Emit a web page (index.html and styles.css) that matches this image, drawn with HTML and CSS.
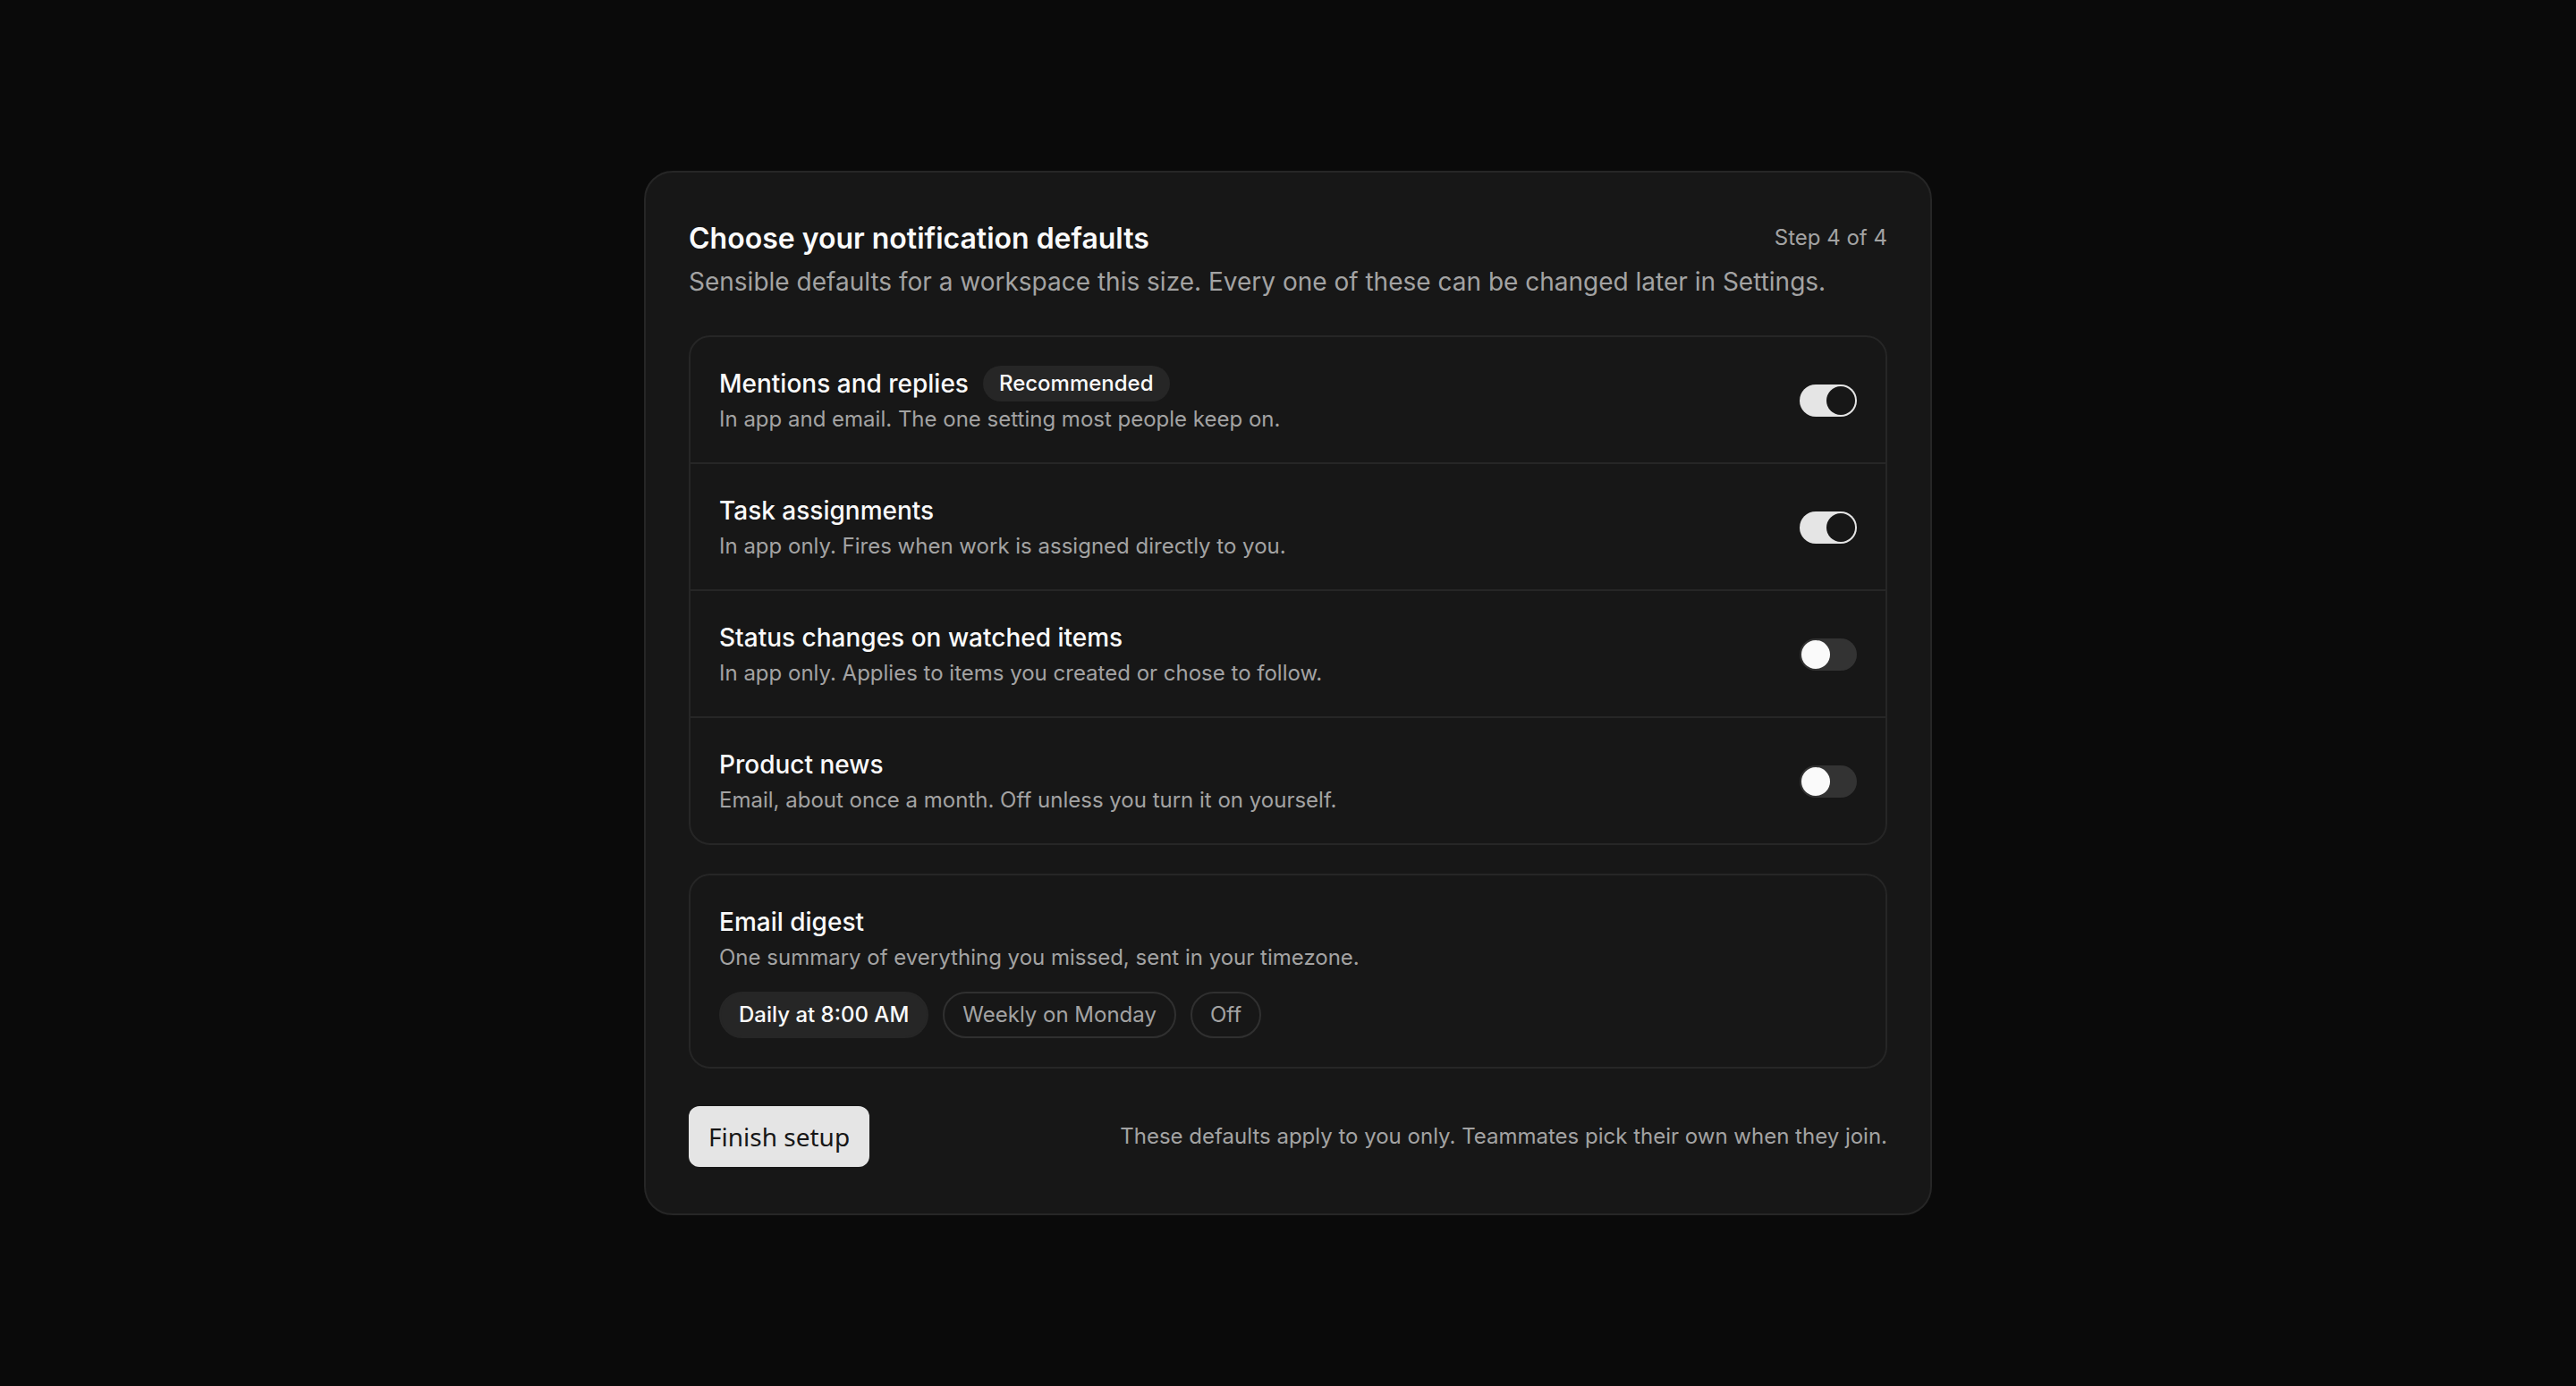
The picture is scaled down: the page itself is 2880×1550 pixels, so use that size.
FILE: index.html
```html
<!DOCTYPE html>
<html lang="en">
<head>
<meta charset="utf-8">
<title>Notification defaults</title>
<link rel="stylesheet" href="styles.css">
</head>
<body>
<main class="card">
  <header class="head">
    <h1 class="title">Choose your notification defaults</h1>
    <span class="step">Step 4 of 4</span>
  </header>
  <p class="subtitle">Sensible defaults for a workspace this size. Every one of these can be changed later in Settings.</p>

  <section class="list">
    <div class="row">
      <div class="row-text">
        <div class="row-title">Mentions and replies <span class="badge">Recommended</span></div>
        <div class="row-desc">In app and email. The one setting most people keep on.</div>
      </div>
      <span class="toggle on"><span class="knob"></span></span>
    </div>
    <div class="row">
      <div class="row-text">
        <div class="row-title">Task assignments</div>
        <div class="row-desc">In app only. Fires when work is assigned directly to you.</div>
      </div>
      <span class="toggle on"><span class="knob"></span></span>
    </div>
    <div class="row">
      <div class="row-text">
        <div class="row-title">Status changes on watched items</div>
        <div class="row-desc">In app only. Applies to items you created or chose to follow.</div>
      </div>
      <span class="toggle"><span class="knob"></span></span>
    </div>
    <div class="row">
      <div class="row-text">
        <div class="row-title">Product news</div>
        <div class="row-desc">Email, about once a month. Off unless you turn it on yourself.</div>
      </div>
      <span class="toggle"><span class="knob"></span></span>
    </div>
  </section>

  <section class="digest">
    <div class="row-title">Email digest</div>
    <div class="row-desc">One summary of everything you missed, sent in your timezone.</div>
    <div class="pills">
      <span class="pill active">Daily at 8:00 AM</span>
      <span class="pill">Weekly on Monday</span>
      <span class="pill">Off</span>
    </div>
  </section>

  <footer class="foot">
    <button class="finish" type="button">Finish setup</button>
    <span class="foot-note">These defaults apply to you only. Teammates pick their own when they join.</span>
  </footer>
</main>
</body>
</html>
```

FILE: styles.css
```css
* { box-sizing: border-box; }

html, body { margin: 0; padding: 0; }

body {
  min-height: 100vh;
  background: #0a0a0a;
  display: flex;
  align-items: center;
  justify-content: center;
  font-family: Inter, "Noto Sans", sans-serif;
  color: #fafafa;
}

.card {
  width: 1440px;
  background: #171717;
  border: 2px solid #262626;
  border-radius: 32px;
  padding: 50px 48px 52px;
}

.head {
  display: flex;
  justify-content: space-between;
  align-items: flex-start;
}

.title {
  margin: 0;
  font-size: 32px;
  line-height: 48px;
  font-weight: 600;
  color: #fafafa;
}

.step {
  font-size: 24px;
  line-height: 46px;
  color: #a3a3a3;
}

.subtitle {
  margin: 4px 0 0;
  font-size: 28px;
  line-height: 40px;
  color: #a3a3a3;
}

.list {
  margin-top: 40px;
  border: 2px solid #262626;
  border-radius: 24px;
}

.row {
  display: flex;
  align-items: center;
  justify-content: space-between;
  padding: 32px 32px 30px;
}

.row + .row { border-top: 2px solid #262626; }

.row-title {
  display: flex;
  align-items: center;
  font-size: 28px;
  line-height: 40px;
  font-weight: 500;
  color: #fafafa;
}

.row-desc {
  margin-top: 2px;
  font-size: 24px;
  line-height: 36px;
  color: #a3a3a3;
}

.badge {
  margin-left: 16px;
  height: 40px;
  padding: 0 18px;
  border-radius: 999px;
  background: #262626;
  font-size: 24px;
  line-height: 40px;
  font-weight: 500;
  color: #fafafa;
}

.toggle {
  position: relative;
  flex: none;
  width: 64px;
  height: 36px;
  border-radius: 18px;
  background: #333333;
}

.toggle .knob {
  position: absolute;
  top: 2px;
  left: 2px;
  width: 32px;
  height: 32px;
  border-radius: 50%;
  background: #fafafa;
}

.toggle.on { background: #e5e5e5; }

.toggle.on .knob {
  left: 30px;
  background: #171717;
}

.digest {
  margin-top: 32px;
  border: 2px solid #262626;
  border-radius: 24px;
  padding: 32px;
}

.pills {
  display: flex;
  gap: 16px;
  margin-top: 20px;
}

.pill {
  height: 52px;
  padding: 0 20px;
  border: 2px solid #303030;
  border-radius: 999px;
  font-size: 24px;
  line-height: 48px;
  color: #a3a3a3;
}

.pill.active {
  background: #262626;
  border-color: #262626;
  color: #fafafa;
  font-weight: 500;
}

.foot {
  margin-top: 42px;
  display: flex;
  align-items: center;
  justify-content: space-between;
}

.finish {
  height: 68px;
  padding: 0 22px;
  border: none;
  border-radius: 12px;
  background: #e5e5e5;
  color: #171717;
  font-family: "Noto Sans", sans-serif;
  font-size: 28px;
  line-height: 68px;
}

.foot-note {
  font-size: 24px;
  line-height: 36px;
  color: #a3a3a3;
}
```
